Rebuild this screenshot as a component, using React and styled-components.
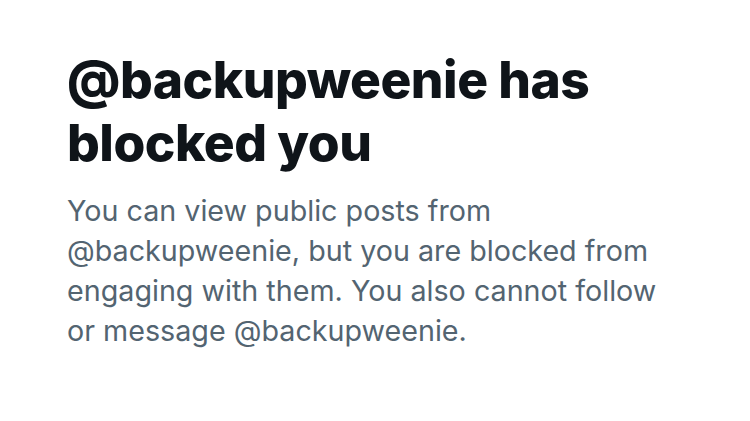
import React from "react"
import styled, { createGlobalStyle } from "styled-components"

const GlobalStyle = createGlobalStyle`
    html, body {
        margin: 0;
        padding: 0;
        background: #ffffff;
    }
    body {
        font-family: Inter, "Noto Sans", sans-serif;
        -webkit-font-smoothing: antialiased;
    }
`

const Page = styled.div`
    width: 750px;
    height: 421px;
    box-sizing: border-box;
    padding: 48px 40px 0 67px;
    display: flex;
    flex-direction: column;
    gap: 17px;
`

const Title = styled.h1`
    margin: 0;
    font-family: Inter, sans-serif;
    font-weight: 800;
    font-size: 51.5px;
    line-height: 63px;
    letter-spacing: -0.5px;
    color: #0f1419;
`

const Body = styled.p`
    margin: 0;
    font-family: Inter, sans-serif;
    font-weight: 400;
    font-size: 28.7px;
    line-height: 40px;
    color: #536471;
`

export default function App(){
    const handle = "backupweenie"

    return (
        <>
            <GlobalStyle />
            <Page>
                <Title>@{handle} has<br />blocked you</Title>
                <Body>
                    You can view public posts from<br />
                    @{handle}, but you are blocked from<br />
                    engaging with them. You also cannot follow<br />
                    or message @{handle}.
                </Body>
            </Page>
        </>
    )
}
